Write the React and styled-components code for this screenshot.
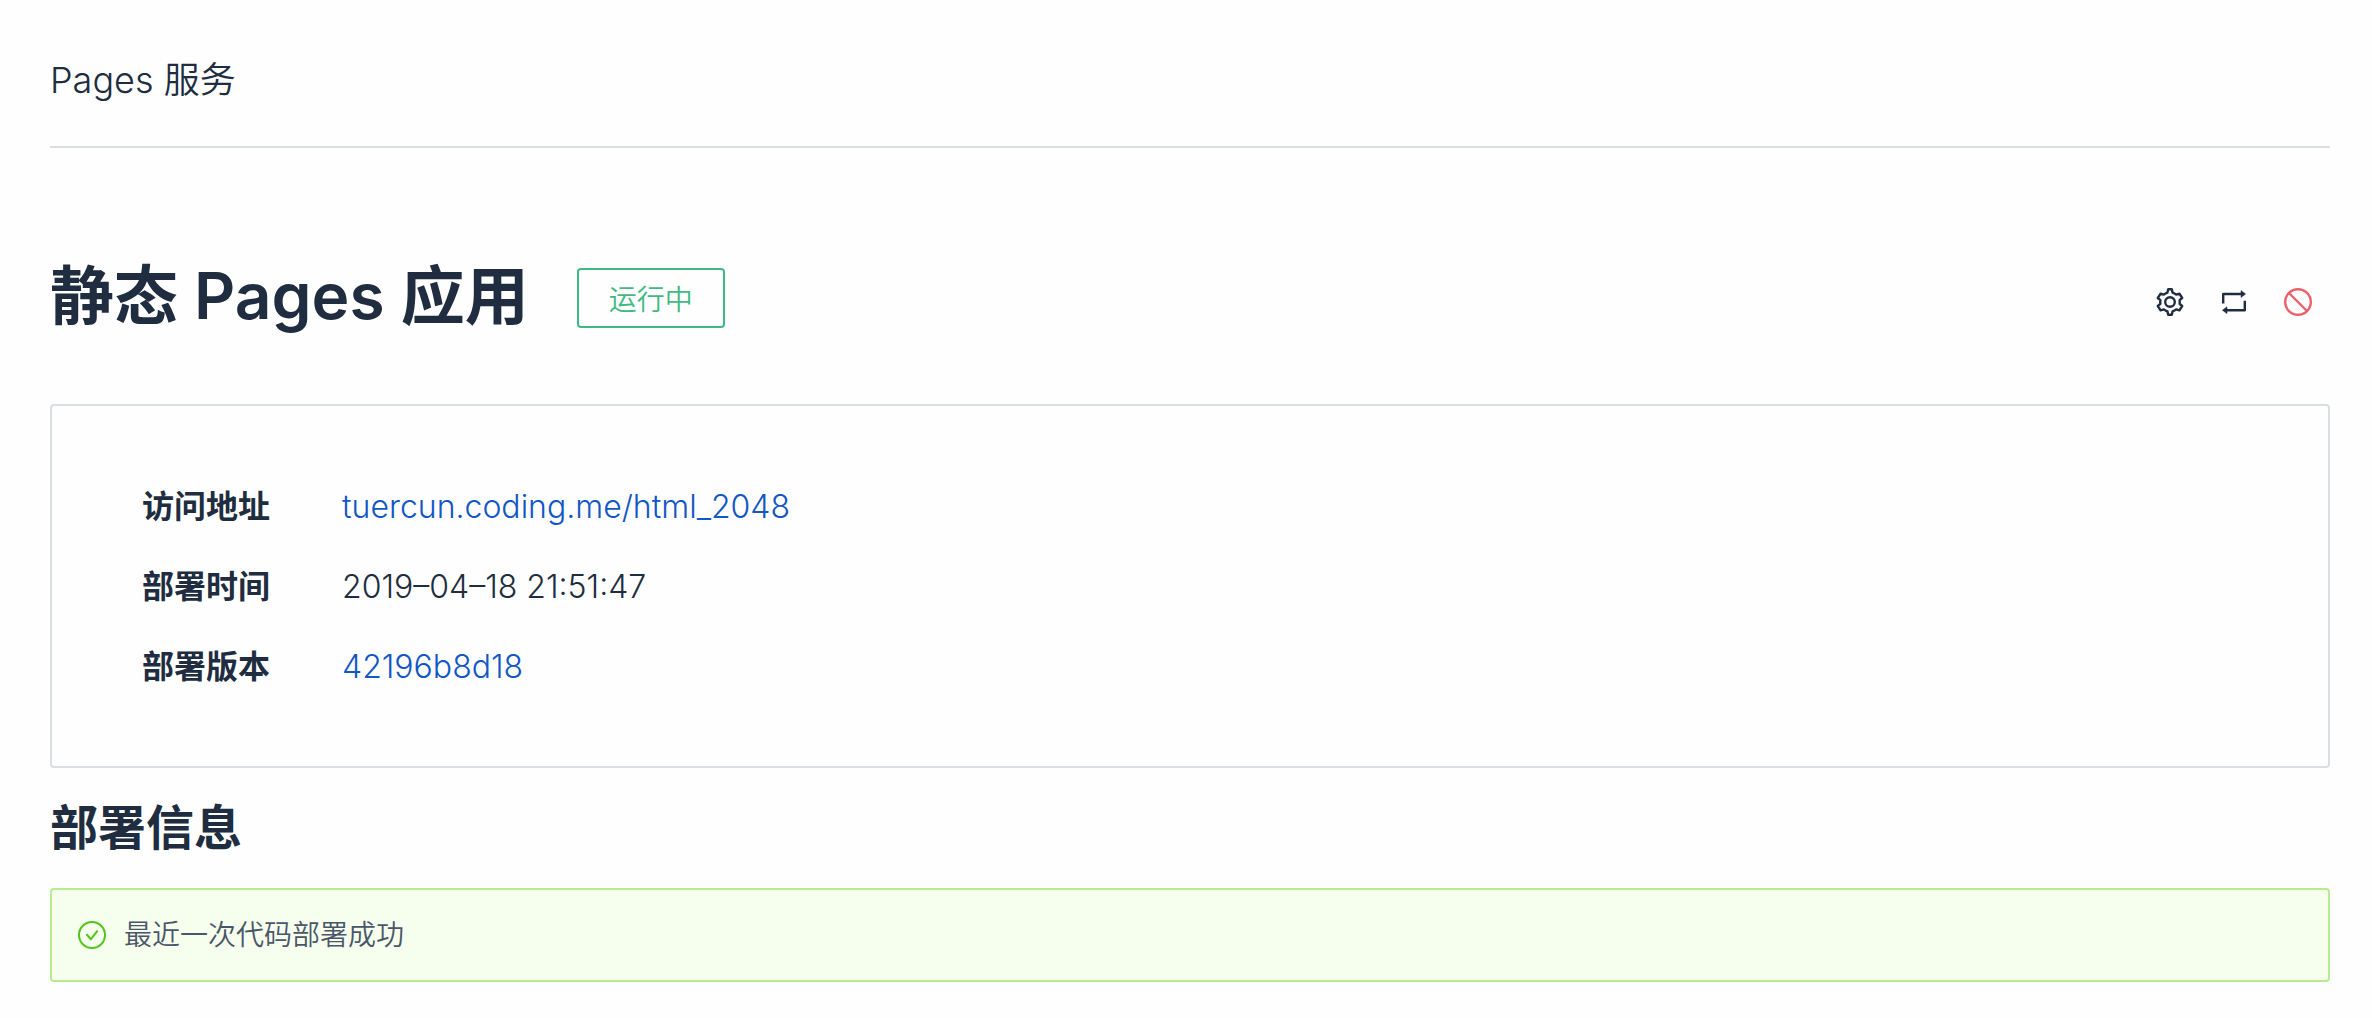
import React from 'react'
import styled, { createGlobalStyle } from 'styled-components'

function App() {
  return (
    <>
      <GlobalStyle />
      <Page>
        <Header>Pages 服务</Header>
        <TitleBar>
          <Title>静态 Pages 应用</Title>
          <Status>运行中</Status>
          <Actions>
            <IconButton type="button" aria-label="设置"><GearIcon /></IconButton>
            <IconButton type="button" aria-label="重新部署"><RepeatIcon /></IconButton>
            <IconButton type="button" aria-label="停止" $danger><StopIcon /></IconButton>
          </Actions>
        </TitleBar>
        <Info>
          <Row>
            <Label>访问地址</Label>
            <Value><Link href="#site">tuercun.coding.me/html_2048</Link></Value>
          </Row>
          <Row>
            <Label>部署时间</Label>
            <Value>2019–04–18 21:51:47</Value>
          </Row>
          <Row>
            <Label>部署版本</Label>
            <Value><Link href="#commit">42196b8d18</Link></Value>
          </Row>
        </Info>
        <SectionTitle>部署信息</SectionTitle>
        <Alert role="status">
          <CheckIcon />
          最近一次代码部署成功
        </Alert>
      </Page>
    </>
  )
}

function GearIcon() {
  return (
    <Icon viewBox="0 0 28 28" $bold>
      <path d="M11.4 4.6 12.2 1.3H15.8L16.6 4.6 Q18.6 5.4 20.2 6.6L23.4 5.6 26.2 10 23.6 12.2Q23.9 14 23.6 15.8L26.2 18 23.4 22.4 20.2 21.4Q18.6 22.7 16.6 23.4L15.8 26.7H12.2L11.4 23.4Q9.4 22.7 7.8 21.4L4.6 22.4 1.8 18 4.4 15.8Q4.1 14 4.4 12.2L1.8 10 4.6 5.6 7.8 6.6Q9.4 5.4 11.4 4.6Z" />
      <circle cx="14" cy="14" r="4.8" />
    </Icon>
  )
}

function RepeatIcon() {
  return (
    <Icon viewBox="0 0 28 28" $bold>
      <path d="M3.2 15.5V6H22M24.8 12.8v9.4H6" />
      <path d="M21 2.6v6.8l4.6-3.4zM7 18.8v6.8l-4.6-3.4z" fill="currentColor" strokeWidth="0.5" />
    </Icon>
  )
}

function StopIcon() {
  return (
    <Icon viewBox="0 0 28 28" $bold>
      <circle cx="14" cy="14" r="12.8" />
      <path d="M5 5l18 18" />
    </Icon>
  )
}

function CheckIcon() {
  return (
    <Icon viewBox="0 0 28 28" $color="#52c41a">
      <circle cx="14" cy="14" r="13" />
      <path d="M8.4 13.2l4.6 5 6.6-8.6" />
    </Icon>
  )
}

export default App

const GlobalStyle = createGlobalStyle`
*{
  box-sizing:border-box;
}
body{
  margin:0;
  background:#fefefe;
  color:#202d40;
  font-family:Inter, "Noto Sans CJK SC", sans-serif;
}`

const Page = styled.main`
padding:0 42px 36px 50px;
`

const Header = styled.header`
padding:53px 0 39px;
border-bottom:2px solid #dadee0;
font-size:36px;
font-weight:350;
line-height:54px;
`

const TitleBar = styled.div`
display:flex;
align-items:center;
padding:100px 0 60px;
`

const Title = styled.h1`
margin:0;
font-size:64px;
font-weight:600;
line-height:96px;
`

const Status = styled.span`
margin:4px 0 0 48px;
padding:4px 30px 0;
border:2px solid #42b983;
border-radius:4px;
color:#42b983;
font-size:28px;
font-weight:350;
line-height:52px;
`

const Actions = styled.div`
display:flex;
gap:36px;
margin:12px 0 0 auto;
padding-right:18px;
`

const IconButton = styled.button`
display:flex;
padding:0;
border:none;
background:none;
cursor:pointer;
color:${props => (props.$danger ? '#ea6169' : '#202d40')};
`

const Icon = styled.svg`
flex:none;
width:28px;
height:28px;
fill:none;
stroke:currentColor;
stroke-width:${props => (props.$bold ? '2.4' : '2')};
stroke-linejoin:round;
color:${props => props.$color || 'inherit'};
`

const Info = styled.dl`
display:flex;
flex-direction:column;
row-gap:32px;
margin:0;
padding:77px 90px 75px;
border:2px solid #dadee0;
border-radius:4px;
font-size:32px;
line-height:48px;
`

const Row = styled.div`
display:flex;
`

const Label = styled.dt`
width:200px;
font-weight:600;
`

const Value = styled.dd`
margin:0;
font-weight:350;
`

const Link = styled.a`
color:#1257c4;
text-decoration:none;
`

const SectionTitle = styled.h2`
margin:24px 0;
font-size:48px;
font-weight:600;
line-height:72px;
`

const Alert = styled.div`
display:flex;
align-items:center;
column-gap:18px;
padding:24px 26px;
border:2px solid #b7eb8f;
border-radius:4px;
background:#f6ffed;
color:#4a5669;
font-size:28px;
font-weight:350;
line-height:42px;
`
